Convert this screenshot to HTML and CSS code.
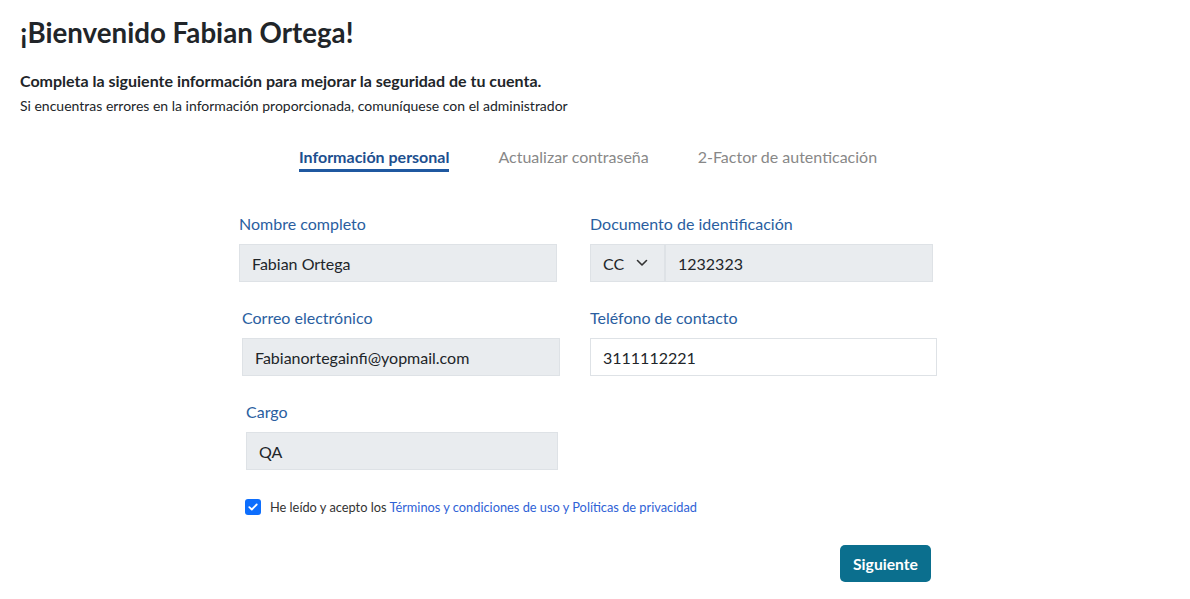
FILE: index.html
```html
<!DOCTYPE html>
<html lang="es">
<head>
    <meta charset="UTF-8">
    <title>Bienvenido</title>
    <link rel="stylesheet" href="styles.css">
</head>
<body>
    <header class="intro">
        <h1>¡Bienvenido Fabian Ortega!</h1>
        <p class="lead">Completa la siguiente información para mejorar la seguridad de tu cuenta.</p>
        <p class="note">Si encuentras errores en la información proporcionada, comuníquese con el administrador</p>
    </header>

    <main class="wizard">
        <nav class="tabs">
            <span class="tab active">Información personal</span>
            <span class="tab">Actualizar contraseña</span>
            <span class="tab">2-Factor de autenticación</span>
        </nav>

        <form class="info-form" onsubmit="event.preventDefault()">
            <div class="field">
                <label for="nombre">Nombre completo</label>
                <input type="text" id="nombre" class="input locked" value="Fabian Ortega" readonly>
            </div>

            <div class="field">
                <label for="documento">Documento de identificación</label>
                <div class="input-group wide-1">
                    <div class="doc-type">
                        <span>CC</span>
                        <svg width="12" height="8" viewBox="0 0 12 8"><path d="M1.5 1.5 L6 6 L10.5 1.5" fill="none" stroke="#333" stroke-width="1.6" stroke-linecap="round" stroke-linejoin="round"/></svg>
                    </div>
                    <input type="text" id="documento" class="input locked plain" value="1232323" readonly>
                </div>
            </div>

            <div class="field shift-3">
                <label for="correo">Correo electrónico</label>
                <input type="text" id="correo" class="input locked" value="Fabianortegainfi@yopmail.com" readonly>
            </div>

            <div class="field">
                <label for="telefono">Teléfono de contacto</label>
                <input type="tel" id="telefono" class="input wide-2" value="3111112221">
            </div>

            <div class="field shift-7">
                <label for="cargo">Cargo</label>
                <input type="text" id="cargo" class="input locked short" value="QA" readonly>
            </div>

            <div class="terms">
                <span class="check">
                    <svg width="10" height="8" viewBox="0 0 10 8"><path d="M1.3 4.2 L3.8 6.5 L8.7 1.5" fill="none" stroke="#fff" stroke-width="1.8" stroke-linecap="round" stroke-linejoin="round"/></svg>
                </span>
                <span>He leído y acepto los <a href="#">Términos y condiciones de uso y Políticas de privacidad</a></span>
            </div>

            <div class="actions">
                <button type="submit">Siguiente</button>
            </div>
        </form>
    </main>
</body>
</html>
```

FILE: styles.css
```css
/* Base */
html, body {
    margin: 0;
    padding: 0;
    box-sizing: border-box;
    font-family: Lato, "Open Sans", Arial, sans-serif;
    color: #212529;
    background: #fff;
}

*, *::before, *::after {
    box-sizing: inherit;
}

/* Header */
.intro {
    padding: 17px 20px 0;
}

h1 {
    margin: 0;
    font-size: 27.7px;
    line-height: 32px;
    font-weight: 700;
}

.lead {
    margin: 22px 0 0;
    font-size: 16px;
    line-height: 20px;
    font-weight: 700;
}

.note {
    margin: 6px 0 0;
    font-size: 14px;
    line-height: 18px;
}

/* Wizard */
.wizard {
    width: 698px;
    margin: 32px 0 0 239px;
}

.tabs {
    display: flex;
    justify-content: center;
    gap: 49px;
}

.tab {
    font-size: 16px;
    line-height: 20px;
    color: #888;
    padding-bottom: 2px;
    border-bottom: 3px solid transparent;
}

.tab.active {
    color: #1d4f8f;
    font-weight: 700;
    border-bottom-color: #1f58a0;
}

/* Form */
.info-form {
    display: grid;
    grid-template-columns: 321px 347px;
    column-gap: 30px;
    row-gap: 26px;
    margin-top: 42px;
}

.field label {
    display: block;
    font-size: 16px;
    line-height: 20px;
    color: #2a5e9f;
    margin-bottom: 10px;
}

.shift-3 {
    margin-left: 3px;
}

.shift-7 {
    margin-left: 7px;
}

.input {
    display: block;
    width: 318px;
    height: 38px;
    padding: 0 12px;
    border: 1px solid #dee2e6;
    border-radius: 0;
    background: #fff;
    font-family: inherit;
    font-size: 16px;
    color: #212529;
    outline: none;
}

.input.locked {
    background: #e9ecef;
}

.input.short {
    width: 312px;
}

.input.wide-2 {
    width: 347px;
}

.input-group {
    display: flex;
    height: 38px;
    border: 1px solid #dee2e6;
    background: #e9ecef;
}

.input-group.wide-1 {
    width: 343px;
}

.doc-type {
    display: flex;
    align-items: center;
    gap: 12px;
    width: 75px;
    padding-left: 12px;
    border-right: 2px solid #dee2e6;
    font-size: 16px;
}

.input.plain {
    flex: 1;
    width: auto;
    height: 36px;
    border: none;
}

/* Terms */
.terms {
    grid-column: 1 / 3;
    display: flex;
    align-items: center;
    gap: 9px;
    margin: 1px 0 0 6px;
    font-size: 12.8px;
    line-height: 20px;
    color: #333;
}

.check {
    display: flex;
    align-items: center;
    justify-content: center;
    width: 16px;
    height: 16px;
    border-radius: 3px;
    background: #0d6efd;
}

.terms a {
    color: #2f62d6;
    text-decoration: none;
}

.actions {
    grid-column: 1 / 3;
    display: flex;
    justify-content: flex-end;
    padding-right: 6px;
    margin-top: 2px;
}

button {
    height: 37px;
    padding: 0 13px;
    border: none;
    border-radius: 5px;
    background-color: #0b6f8e;
    color: #fff;
    font-family: inherit;
    font-size: 15.7px;
    font-weight: 700;
    cursor: pointer;
}
```
